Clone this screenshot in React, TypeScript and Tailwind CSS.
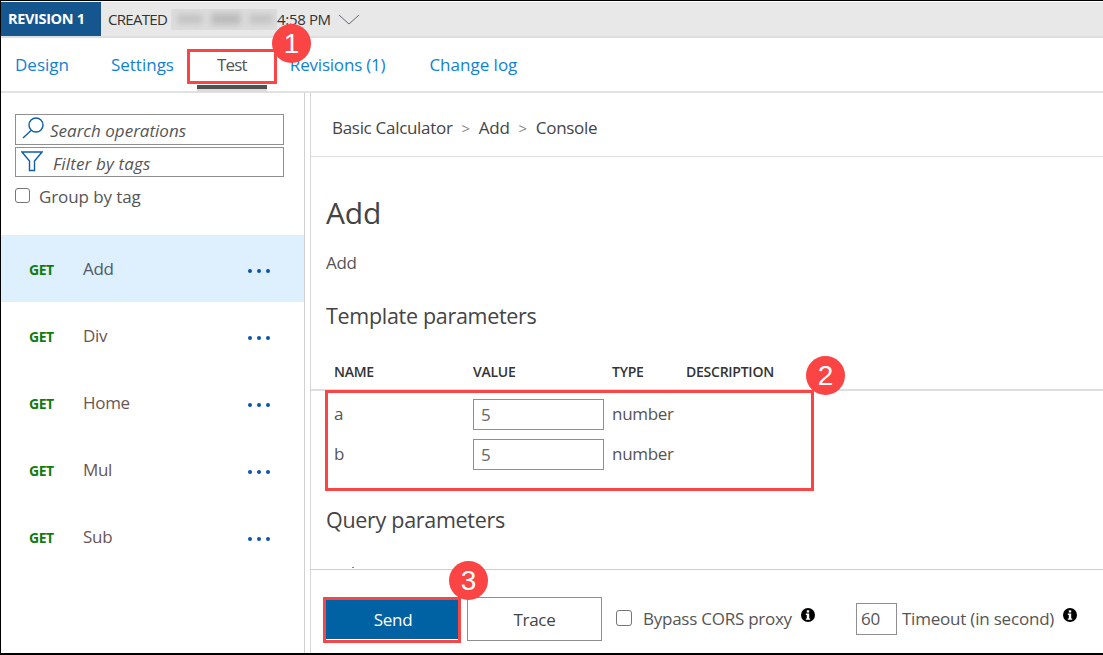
import React from "react";

const font = { fontFamily: '"Open Sans", "Noto Sans", sans-serif' };

function Badge({ n, className }: { n: string; className: string }) {
  return (
    <div className={`absolute w-[39px] h-[39px] rounded-full bg-[#fb4444] text-white flex items-center justify-center text-[28px] leading-none ${className}`} style={{ fontFamily: '"Liberation Sans", sans-serif' }}>
      {n}
    </div>
  );
}

function Op({ name, active }: { name: string; active?: boolean }) {
  return (
    <div className={`h-[67px] flex items-center pl-[28px] pr-[34px] ${active ? "bg-[#deeffd]" : ""}`}>
      <span className="w-[54px] text-[14px] font-bold text-[#107c10] tracking-[-0.5px] pt-[1px]">GET</span>
      <span className={`flex-1 text-[17px] leading-[24px] tracking-[-0.3px] ${active ? "text-[#505a6b]" : "text-[#6b5555]"}`}>{name}</span>
      <div className="flex gap-[5px] pt-[5px]">
        <i className="w-[4px] h-[4px] rounded-full bg-[#0a55a8]" />
        <i className="w-[4px] h-[4px] rounded-full bg-[#0a55a8]" />
        <i className="w-[4px] h-[4px] rounded-full bg-[#0a55a8]" />
      </div>
    </div>
  );
}

function Param({ name, mt }: { name: string; mt: string }) {
  return (
    <div className={`flex items-center h-[31px] ${mt} text-[17px] leading-[24px] text-[#555] tracking-[-0.3px]`}>
      <span className="w-[147px] pl-[8px] -mt-[2px]">{name}</span>
      <div className="w-[131px] h-[31px] border border-[#8f8f8f] pl-[7px] pt-[3px] text-[#666]">5</div>
      <span className="ml-[8px] -mt-[2px]">number</span>
    </div>
  );
}

function Info({ className }: { className: string }) {
  return (
    <svg viewBox="0 0 14 14" className={`w-[14px] h-[14px] ${className}`}>
      <circle cx="7" cy="7" r="7" fill="#000" />
      <rect x="5.8" y="2.3" width="2.4" height="2.2" fill="#fff" />
      <path d="M4.8 5.6H8.2V10.4H9.2V11.8H4.8V10.4H5.8V7H4.8Z" fill="#fff" />
    </svg>
  );
}

export default function App() {
  return (
    <div className="relative w-[1103px] h-[655px] bg-white overflow-hidden border-t border-l border-b-2 border-black flex flex-col box-border" style={font}>
      <div className="h-[36px] mt-px shrink-0 bg-[#e8e8e8] border-b-2 border-[#dedede] flex items-center">
        <div className="w-[100px] h-full bg-[#15568f] text-white font-bold text-[14.5px] tracking-[-0.35px] flex items-center pl-[7px]">REVISION 1</div>
        <span className="ml-[7px] text-[15px] tracking-[-0.7px] text-[#333]">CREATED</span>
        <div className="ml-[4px] w-[106px] h-[21px] bg-[#dddddd] overflow-hidden flex items-center gap-[8px] pl-[6px]">
          <i className="w-[26px] h-[10px] bg-[#c4c4c4] blur-[3px]" />
          <i className="w-[30px] h-[12px] bg-[#bcbcbc] blur-[3px]" />
          <i className="w-[24px] h-[10px] bg-[#c4c4c4] blur-[3px]" />
        </div>
        <span className="text-[15px] tracking-[-0.35px] text-[#333]">4:58 PM</span>
        <svg viewBox="0 0 22 11" className="ml-[7px] w-[22px] h-[11px]"><path d="M1 1L11 10L21 1" fill="none" stroke="#667" strokeWidth="1" /></svg>
      </div>

      <div className="relative h-[55px] shrink-0 border-b-2 border-[#e2e2e2] flex items-center text-[17px] text-[#0f82d6]">
        <span className="ml-[14px]">Design</span>
        <span className="ml-[42px]">Settings</span>
        <span className="ml-[43px] text-[#555] tracking-[-0.8px]">Test</span>
        <span className="ml-[43px] tracking-[-0.2px]">Revisions (1)</span>
        <span className="ml-[44px]">Change log</span>
        <div className="absolute left-[196px] top-[47px] w-[70px] h-[4px] bg-[#505050]" />
        <div className="absolute left-[196px] top-[51px] w-[70px] h-[3px] bg-[#dcdcdc]" />
      </div>

      <div className="flex flex-1 min-h-0">
        <aside className="w-[304px] shrink-0 border-r border-[#d0d0d0] flex flex-col">
          <div className="mt-[21px] ml-[14px] w-[269px] h-[31px] border border-[#8f8f8f] flex items-center">
            <svg viewBox="0 0 24 24" className="ml-[5px] w-[24px] h-[24px] -mt-[4px]" fill="none" stroke="#0f5ea8" strokeWidth="1.4"><circle cx="15" cy="9" r="7" /><path d="M10 14.5L2 22" /></svg>
            <span className="ml-[5px] pt-[2px] text-[17px] leading-[24px] italic text-[#555]">Search operations</span>
          </div>
          <div className="mt-[2px] ml-[14px] w-[269px] h-[30px] border border-[#8f8f8f] flex items-center">
            <svg viewBox="0 0 22 22" className="ml-[5px] w-[22px] h-[22px] -mt-[3px]" fill="none" stroke="#0f5ea8" strokeWidth="1.4"><path d="M1 2H21L13.5 11V20.5H8.5V11Z" /></svg>
            <span className="ml-[10px] pt-[4px] text-[17px] leading-[24px] italic text-[#555] tracking-[0.15px]">Filter by tags</span>
          </div>
          <div className="mt-[8px] ml-[14px] flex items-center">
            <div className="w-[15px] h-[15px] border border-[#767676] rounded-[3px] -mt-[4px]" />
            <span className="ml-[9px] text-[17px] leading-[24px] text-[#555] tracking-[-0.1px]">Group by tag</span>
          </div>
          <div className="mt-[26px]">
            <Op name="Add" active />
            <Op name="Div" />
            <Op name="Home" />
            <Op name="Mul" />
            <Op name="Sub" />
          </div>
        </aside>
        <div className="w-[5px] shrink-0" />
        <main className="flex-1 min-w-0 border-l border-[#d6d6d6] flex flex-col">
          <div className="h-[64px] shrink-0 border-b border-[#e0e0e0] flex items-center pl-[21px] pt-[6px] text-[17px] leading-[24px] text-[#444] tracking-[-0.3px]">
            Basic Calculator<span className="mx-[9px] text-[#888] text-[15px]">&gt;</span>Add<span className="mx-[9px] text-[#888] text-[15px]">&gt;</span>Console
          </div>
          <div className="flex-1 min-h-0 overflow-hidden">
            <h1 className="mt-[35px] ml-[15px] text-[30px] leading-[42px] text-[#444] tracking-[-0.2px]">Add</h1>
            <p className="mt-[17px] ml-[15px] text-[17px] leading-[24px] text-[#555] tracking-[-0.3px]">Add</p>
            <h2 className="mt-[26px] ml-[15px] text-[21.5px] leading-[30px] text-[#444] tracking-[-0.3px]">Template parameters</h2>
            <div className="mt-[31px] h-[29px] flex border-b-2 border-[#dedede] text-[14px] leading-[20px] font-semibold text-[#333] tracking-[-0.25px]">
              <span className="w-[162px] pl-[23px]">NAME</span>
              <span className="w-[139px]">VALUE</span>
              <span className="w-[74px]">TYPE</span>
              <span>DESCRIPTION</span>
            </div>
            <div className="ml-[15px]">
              <Param name="a" mt="mt-[8px]" />
              <Param name="b" mt="mt-[9px]" />
            </div>
            <h2 className="mt-[35px] ml-[15px] text-[21.5px] leading-[30px] text-[#444] tracking-[-0.3px]">Query parameters</h2>
            <div className="mt-[32px] ml-[41px] w-[2px] h-px bg-[#4a90d0]" />
          </div>
          <div className="h-[84px] shrink-0 border-t border-[#cfcfcf] flex items-start pt-[27px] pl-[15px]">
            <button className="w-[134px] h-[42px] pt-[3px] bg-[#0062a3] text-white text-[17px] tracking-[-0.3px]">Send</button>
            <button className="ml-[7px] w-[135px] h-[44px] pt-[2px] border border-[#8f8f8f] text-[17px] text-[#444] tracking-[-0.3px]">Trace</button>
            <div className="ml-[14px] mt-[13px] w-[16px] h-[16px] border border-[#767676] rounded-[3px] shrink-0" />
            <span className="ml-[11px] mt-[10px] text-[17px] leading-[24px] text-[#555] tracking-[-0.25px] whitespace-nowrap">Bypass CORS proxy</span>
            <Info className="ml-[9px] mt-[11px] shrink-0" />
            <div className="ml-[41px] mt-[6px] w-[41px] h-[32px] border border-[#8f8f8f] text-[17px] text-[#555] pl-[4px] leading-[30px] shrink-0">60</div>
            <span className="ml-[5px] mt-[10px] text-[17px] leading-[24px] text-[#555] tracking-[-0.2px] whitespace-nowrap">Timeout (in second)</span>
            <Info className="ml-[9px] mt-[11px] shrink-0" />
          </div>
        </main>
      </div>

      <div className="absolute left-[186px] top-[48px] w-[90px] h-[35px] border-[3px] border-[#f94545]" />
      <Badge n="1" className="left-[271px] top-[23px]" />
      <div className="absolute left-[324px] top-[389px] w-[489px] h-[101px] border-[3px] border-[#f94545]" />
      <Badge n="2" className="left-[805px] top-[355px]" />
      <div className="absolute left-[322px] top-[596px] w-[138px] h-[46px] border-[3px] border-[#f94545]" />
      <Badge n="3" className="left-[448px] top-[560px]" />
    </div>
  );
}
